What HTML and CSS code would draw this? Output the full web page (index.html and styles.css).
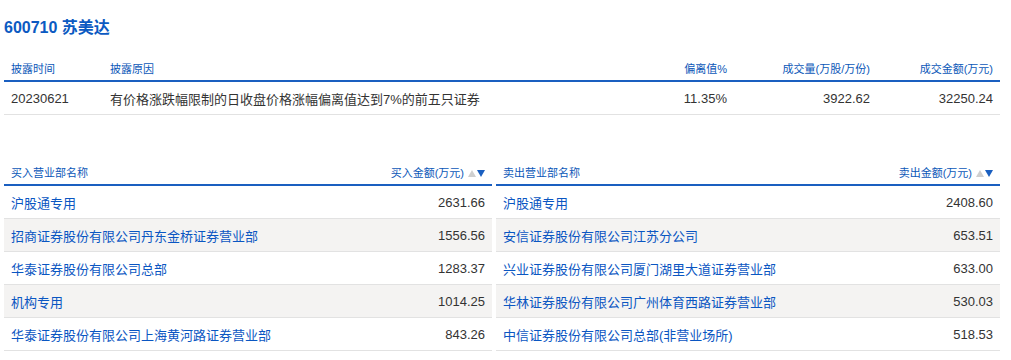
FILE: index.html
```html
<!DOCTYPE html>
<html lang="zh-CN">
<head>
<meta charset="utf-8">
<title>600710 苏美达</title>
<link rel="stylesheet" href="styles.css">
</head>
<body>
<div class="page">
  <h1 class="title">600710 苏美达</h1>

  <table class="tbl top">
    <colgroup>
      <col class="c1"><col><col class="c3"><col class="c4"><col class="c5">
    </colgroup>
    <thead>
      <tr>
        <th>披露时间</th>
        <th>披露原因</th>
        <th class="r">偏离值%</th>
        <th class="r">成交量(万股/万份)</th>
        <th class="r">成交金额(万元)</th>
      </tr>
    </thead>
    <tbody>
      <tr>
        <td class="num-l">20230621</td>
        <td class="dark">有价格涨跌幅限制的日收盘价格涨幅偏离值达到7%的前五只证券</td>
        <td class="r num">11.35%</td>
        <td class="r num">3922.62</td>
        <td class="r num">32250.24</td>
      </tr>
    </tbody>
  </table>

  <div class="pair">
    <table class="tbl side left">
      <thead>
        <tr>
          <th>买入营业部名称</th>
          <th class="r">买入金额(万元)<span class="sort"><i class="up"></i><i class="down"></i></span></th>
        </tr>
      </thead>
      <tbody>
        <tr><td class="name">沪股通专用</td><td class="r num">2631.66</td></tr>
        <tr class="alt"><td class="name">招商证券股份有限公司丹东金桥证券营业部</td><td class="r num">1556.56</td></tr>
        <tr><td class="name">华泰证券股份有限公司总部</td><td class="r num">1283.37</td></tr>
        <tr class="alt"><td class="name">机构专用</td><td class="r num">1014.25</td></tr>
        <tr><td class="name">华泰证券股份有限公司上海黄河路证券营业部</td><td class="r num">843.26</td></tr>
      </tbody>
    </table>

    <table class="tbl side right">
      <thead>
        <tr>
          <th>卖出营业部名称</th>
          <th class="r">卖出金额(万元)<span class="sort"><i class="up"></i><i class="down"></i></span></th>
        </tr>
      </thead>
      <tbody>
        <tr><td class="name">沪股通专用</td><td class="r num">2408.60</td></tr>
        <tr class="alt"><td class="name">安信证券股份有限公司江苏分公司</td><td class="r num">653.51</td></tr>
        <tr><td class="name">兴业证券股份有限公司厦门湖里大道证券营业部</td><td class="r num">633.00</td></tr>
        <tr class="alt"><td class="name">华林证券股份有限公司广州体育西路证券营业部</td><td class="r num">530.03</td></tr>
        <tr><td class="name">中信证券股份有限公司总部(非营业场所)</td><td class="r num">518.53</td></tr>
      </tbody>
    </table>
  </div>
</div>
</body>
</html>
```

FILE: styles.css
```css
html, body {
  margin: 0;
  padding: 0;
  background: #fff;
}
body {
  font-family: "Liberation Sans", "Noto Sans CJK SC", sans-serif;
  color: #333;
}
.page {
  padding: 17px 11px 0 4px;
}
.title {
  margin: 0 0 17px 0;
  font-size: 16px;
  line-height: 22px;
  font-weight: bold;
  color: #0b5ac2;
}
.tbl {
  border-collapse: collapse;
  table-layout: fixed;
}
.tbl th {
  height: 24px;
  padding: 0 7px;
  font-size: 11px;
  font-weight: normal;
  color: #0b57b8;
  text-align: left;
  vertical-align: middle;
  border-bottom: 2px solid #1a5fc0;
  white-space: nowrap;
}
.tbl td {
  height: 32px;
  padding: 0 7px;
  font-size: 13px;
  border-bottom: 1px solid #e2e2e2;
  vertical-align: middle;
  white-space: nowrap;
}
.tbl .r {
  text-align: right;
}
.top {
  width: 996px;
}
.top .c1 { width: 99px; }
.top .c3 { width: 100px; }
.top .c4 { width: 143px; }
.top .c5 { width: 123px; }
.top .dark, .top .num-l, .num {
  color: #333;
}
.pair {
  display: flex;
  gap: 4px;
  margin-top: 45px;
}
.side.left {
  width: 488px;
}
.side.right {
  width: 504px;
}
.side th:last-child {
  width: 130px;
}
.side .name {
  color: #0a56c2;
}
.side tr.alt td {
  background: #f4f3f2;
}
.sort {
  display: inline-flex;
  align-items: center;
  gap: 1px;
  margin-left: 4px;
  vertical-align: middle;
  position: relative;
  top: -1px;
}
.sort i {
  display: block;
  width: 0;
  height: 0;
  border-left: 4px solid transparent;
  border-right: 4px solid transparent;
}
.sort .up {
  border-bottom: 7px solid #cfcfcf;
}
.sort .down {
  border-top: 7px solid #1a5fc0;
}
```
